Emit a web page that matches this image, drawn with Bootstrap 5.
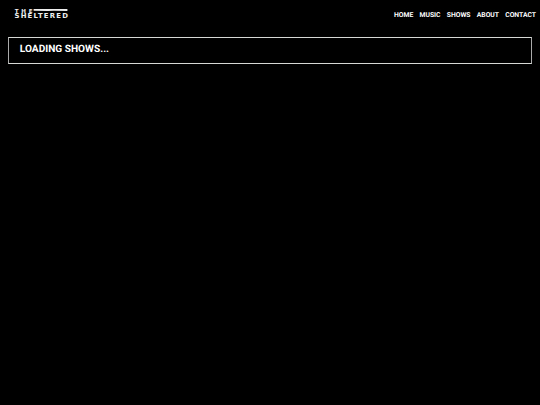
<!DOCTYPE html>
<html lang="en">
<head>
    <meta charset="utf-8">
    <title>The Sheltered - Shows</title>
    <meta name="viewport" content="width=device-width, initial-scale=1">
    <link href="https://cdn.jsdelivr.net/npm/bootstrap@5.3.6/dist/css/bootstrap.min.css" rel="stylesheet">
    <script src="https://cdn.jsdelivr.net/npm/bootstrap@5.3.6/dist/js/bootstrap.bundle.min.js"></script>
    <style>
        body {
            background: #000;
            color: #fff;
            font-family: Roboto, "Liberation Sans", sans-serif;
        }
        .site-header {
            height: 28px;
            padding: 0 4px 0 14px;
        }
        .site-logo {
            width: 55px;
            height: 12px;
        }
        .site-logo text {
            font-family: "DejaVu Sans", sans-serif;
            font-weight: 700;
            text-rendering: geometricPrecision;
        }
        .site-menu {
            gap: 6.2px;
            padding-top: 1px;
        }
        .site-menu .nav-link {
            color: #fff;
            font-size: 6.8px;
            font-weight: 700;
            line-height: 10px;
            text-rendering: geometricPrecision;
        }
        .shows-box {
            margin: 9px 8px 0;
            height: 27px;
            padding: 4px 10.8px;
            border: 1px solid #d5d8d5;
            border-left-color: #aaa;
            border-right-color: #aaa;
        }
        .shows-title {
            font-size: 10.15px;
            font-weight: 700;
            line-height: 15px;
            text-rendering: geometricPrecision;
        }
    </style>
</head>
<body class="vh-100">
    <header class="site-header d-flex align-items-center justify-content-between">
        <!-- Logo -->
        <a href="#" class="d-flex">
            <svg class="site-logo" viewBox="0 0 55 12" fill="#eee" role="img" aria-label="The Sheltered">
                <text x="0.7" y="4.6" font-size="5.6" textLength="18" lengthAdjust="spacing">THE</text>
                <path d="M19.6 1H53.4V3L40 2.7 34 3 19.6 2.7z"/>
                <text x="0.5" y="10" font-size="6.9" textLength="53.4" lengthAdjust="spacing">SHELTERED</text>
            </svg>
        </a>

        <!-- Menu -->
        <nav class="site-menu nav flex-nowrap">
            <a class="nav-link p-0" href="#">HOME</a>
            <a class="nav-link p-0" href="#">MUSIC</a>
            <a class="nav-link p-0" href="#">SHOWS</a>
            <a class="nav-link p-0" href="#">ABOUT</a>
            <a class="nav-link p-0" href="#">CONTACT</a>
        </nav>
    </header>

    <main class="shows-box">
        <h1 class="shows-title m-0">LOADING SHOWS...</h1>
    </main>
</body>
</html>
